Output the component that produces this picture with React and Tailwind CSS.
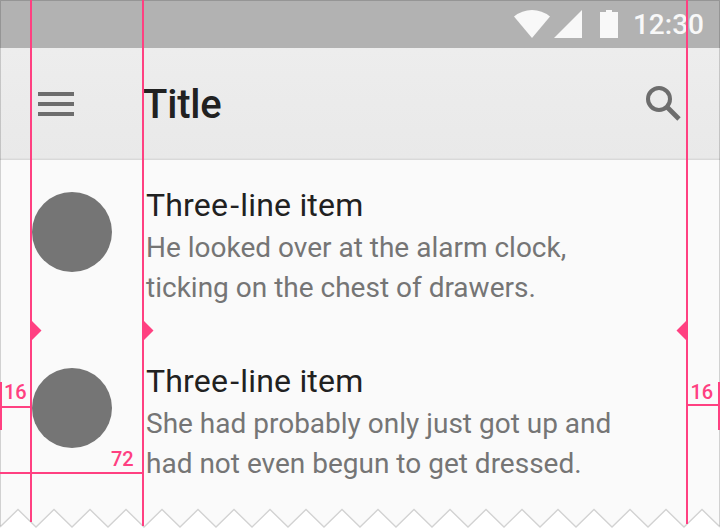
const items = [
  { title: ['Three', 'line item'], lines: ['He looked over at the alarm clock,', 'ticking on the chest of drawers.'] },
  { title: ['Three', 'line item'], lines: ['She had probably only just got up and', 'had not even begun to get dressed.'] },
];

const tornEdge = Array.from({ length: 41 }, (_, i) => `${i * 18},${i % 2 ? 9.5 : 27}`).join(' ');

function StatusBar() {
  return (
    <div className="flex h-12 items-center justify-end bg-[#b2b2b2] pr-[16px] text-[#f8f8f8]">
      <svg className="h-12 w-[110px]" viewBox="509 0 110 48" fill="currentColor">
        <path d="M532 38 514 16.500Q522 10 532 10T550 16.500Z" />
        <path d="M554 38 582 10V38Z" />
        <path d="M600 12h6v-2h6v2h6v26h-18Z" />
      </svg>
      <span className="ml-[14px] pt-0.5 text-[28px] leading-[48px] font-medium">12:30</span>
    </div>
  );
}

function AppBar() {
  return (
    <header className="flex h-28 items-center bg-linear-to-b from-[#ededed] to-[#e9e9e9] px-[38px] shadow-[inset_0_-1px_0_#d9d9d9,inset_0_-2px_0_#e2e2e2]">
      <div className="flex w-9 flex-col gap-1.5">
        <div className="h-1 bg-[#6d6d6d]" />
        <div className="h-1 bg-[#6d6d6d]" />
        <div className="h-1 bg-[#6d6d6d]" />
      </div>
      <h1 className="ml-[69px] flex-1 pt-px text-[40px] leading-[48px] font-medium tracking-[-0.2px] text-[#212121]">Title</h1>
      <svg className="size-9" viewBox="646 86 36 36" fill="none" stroke="#6d6d6d" strokeWidth="4">
        <circle cx="659" cy="99" r="11" />
        <path d="M667.500 107.500 679 119" strokeWidth="4.700" />
      </svg>
    </header>
  );
}

function ListItem({ title, lines }) {
  return (
    <li className="flex h-44 pt-6 pl-8">
      <div className="mt-2 size-20 rounded-full bg-[#757575]" />
      <div className="ml-[34px] whitespace-nowrap">
        <div className="mt-px text-[32px] leading-[40px] tracking-[0.2px] text-[#212121]">
          {title[0]}<span className="mr-[1px] ml-[2px]">-</span>{title[1]}
        </div>
        <div className="mt-[3px] text-[28px] leading-[40px] text-[#757575]">
          {lines.map((line) => <div key={line}>{line}</div>)}
        </div>
      </div>
    </li>
  );
}

function Keylines() {
  return (
    <svg className="absolute inset-0 h-[528px] w-[720px]" viewBox="0 0 720 528" fill="#ff4081">
      <path d="M.5 526V.5H719.500V526" fill="none" stroke="#000" strokeOpacity=".16" />
      <rect x="30" y="0" width="2" height="522" />
      <rect x="142" y="0" width="2" height="526" />
      <rect x="686" y="0" width="2" height="524" />
      <path d="M32 321 41.500 330.500 32 340ZM144 321 153.500 330.500 144 340ZM686 321 676.500 330.500 686 340Z" />
      <rect x="0" y="382" width="2" height="48" />
      <rect x="2" y="406" width="28" height="2" />
      <rect x="0" y="472" width="142" height="2" />
      <rect x="688" y="404" width="30" height="2" />
      <rect x="718" y="382" width="2" height="48" />
      <g fontSize="20" fontWeight="500">
        <text x="4" y="399">16</text>
        <text x="111" y="466">72</text>
        <text x="690.500" y="399">16</text>
      </g>
    </svg>
  );
}

export default function App() {
  return (
    <div className="relative h-[528px] w-[720px] overflow-hidden bg-[#fafafa] font-['Roboto',sans-serif]">
      <StatusBar />
      <AppBar />
      <ul className="h-[340px] overflow-hidden">
        {items.map((item, i) => <ListItem key={i} {...item} />)}
      </ul>
      <svg className="h-7 w-[720px]" viewBox="0 0 720 28">
        <polygon points={`0,28 ${tornEdge} 720,28`} fill="#fff" />
        <polyline points={tornEdge} fill="none" stroke="#d2d2d2" strokeWidth="1.3" />
      </svg>
      <Keylines />
    </div>
  );
}
